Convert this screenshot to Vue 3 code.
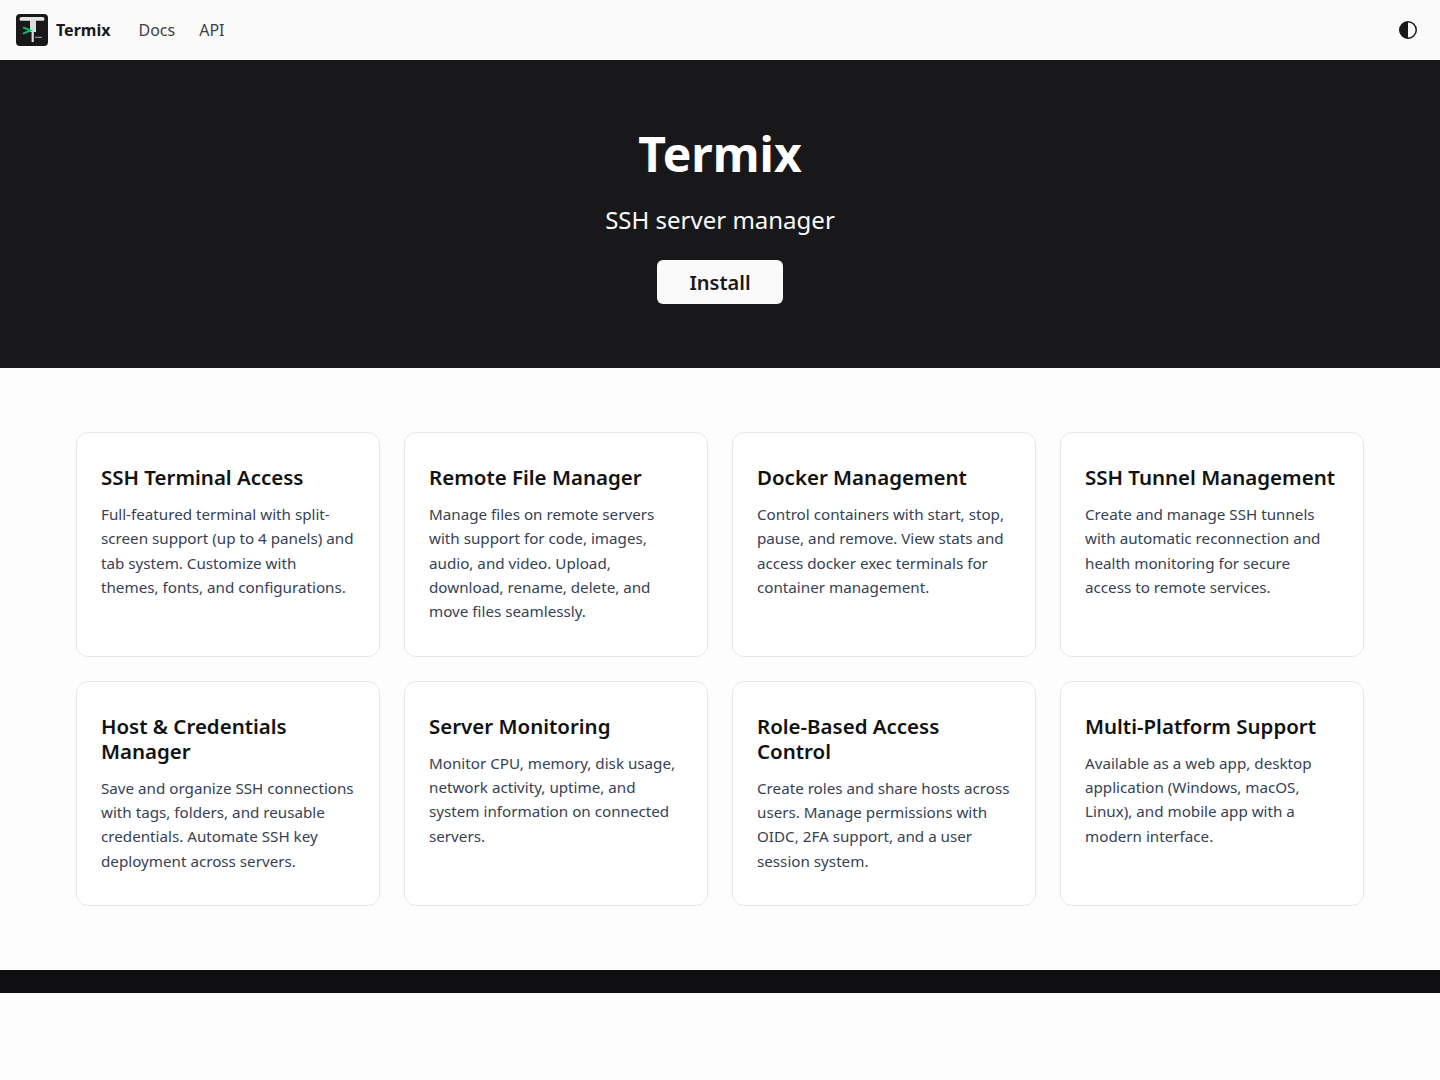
<template>
  <div class="page">
    <!-- Navbar -->
    <header class="navbar">
      <div class="nav-left">
        <a href="#" class="brand">
          <svg class="logo" viewBox="0 0 32 32" width="32" height="32">
            <rect x="0" y="0" width="32" height="32" rx="4" fill="#18181b" />
            <rect x="3.500" y="3" width="25" height="3.800" rx="1.900" fill="#e4e4e4" />
            <path d="M14 6h6v12h-2.200v10h-2.200V18H14z" fill="#dcdcdc" />
            <path d="M19 22.700h7V24h-7z" fill="#8c8c8c" />
            <path d="M7 13.300l7.500 3.200-7.500 3.200" fill="none" stroke="#00c16a" stroke-width="2" />
          </svg>
          <span class="brand-name">Termix</span>
        </a>
        <nav class="nav-links">
          <a href="#" class="nav-link">Docs</a>
          <a href="#" class="nav-link">API</a>
        </nav>
      </div>
      <button class="theme-btn" aria-label="Toggle theme">
        <svg viewBox="0 0 20 20" width="20" height="20">
          <circle cx="10" cy="10" r="8.250" fill="none" stroke="#18181b" stroke-width="1.500" />
          <path d="M10 1.750a8.250 8.250 0 0 0 0 16.500z" fill="#18181b" />
        </svg>
      </button>
    </header>

    <!-- Hero -->
    <section class="hero">
      <h1 class="hero-title">Termix</h1>
      <p class="hero-subtitle">SSH server manager</p>
      <a href="#" class="install-btn">Install</a>
    </section>

    <!-- Features -->
    <main class="features">
      <article v-for="feature in features" :key="feature.title" class="feature-card">
        <h2 class="feature-title">{{ feature.title }}</h2>
        <p class="feature-text">{{ feature.text }}</p>
      </article>
    </main>

    <footer class="footer"></footer>
  </div>
</template>

<script setup>
const features = [
  {
    title: 'SSH Terminal Access',
    text: 'Full-featured terminal with split-screen support (up to 4 panels) and tab system. Customize with themes, fonts, and configurations.'
  },
  {
    title: 'Remote File Manager',
    text: 'Manage files on remote servers with support for code, images, audio, and video. Upload, download, rename, delete, and move files seamlessly.'
  },
  {
    title: 'Docker Management',
    text: 'Control containers with start, stop, pause, and remove. View stats and access docker exec terminals for container management.'
  },
  {
    title: 'SSH Tunnel Management',
    text: 'Create and manage SSH tunnels with automatic reconnection and health monitoring for secure access to remote services.'
  },
  {
    title: 'Host & Credentials Manager',
    text: 'Save and organize SSH connections with tags, folders, and reusable credentials. Automate SSH key deployment across servers.'
  },
  {
    title: 'Server Monitoring',
    text: 'Monitor CPU, memory, disk usage, network activity, uptime, and system information on connected servers.'
  },
  {
    title: 'Role-Based Access Control',
    text: 'Create roles and share hosts across users. Manage permissions with OIDC, 2FA support, and a user session system.'
  },
  {
    title: 'Multi-Platform Support',
    text: 'Available as a web app, desktop application (Windows, macOS, Linux), and mobile app with a modern interface.'
  }
]
</script>

<style>
html,
body {
  margin: 0;
  background: #fdfdfd;
}
</style>

<style scoped>
.page {
  min-height: 1080px;
  background: #fdfdfd;
  font-family: "Noto Sans", sans-serif;
}

/* Navbar */
.navbar {
  height: 60px;
  padding: 0 16px;
  display: flex;
  align-items: center;
  justify-content: space-between;
  background: #fafafa;
}

.nav-left {
  display: flex;
  align-items: center;
  gap: 28px;
}

.brand {
  display: flex;
  align-items: center;
  gap: 8px;
  text-decoration: none;
}

.logo {
  display: block;
}

.brand-name {
  font-size: 16px;
  font-weight: 700;
  color: #18181b;
}

.nav-links {
  display: flex;
  gap: 24px;
}

.nav-link {
  font-size: 16px;
  color: #3f3f46;
  text-decoration: none;
}

.theme-btn {
  width: 32px;
  height: 32px;
  padding: 0;
  border: none;
  background: none;
  display: flex;
  align-items: center;
  justify-content: center;
}

/* Hero */
.hero {
  height: 308px;
  box-sizing: border-box;
  padding-top: 64px;
  background: #18181b;
  display: flex;
  flex-direction: column;
  align-items: center;
}

.hero-title {
  margin: 0;
  font-size: 48px;
  line-height: 60px;
  font-weight: 700;
  color: #fff;
}

.hero-subtitle {
  margin: 20px 0 0;
  font-size: 24px;
  line-height: 32px;
  color: #fafafa;
}

.install-btn {
  margin-top: 24px;
  width: 126px;
  height: 44px;
  border-radius: 6px;
  background: #fafafa;
  color: #18181b;
  font-size: 20px;
  font-weight: 600;
  display: flex;
  align-items: center;
  justify-content: center;
  text-decoration: none;
}

/* Features */
.features {
  padding: 64px 76px;
  display: grid;
  grid-template-columns: repeat(4, 1fr);
  gap: 24px;
}

.feature-card {
  padding: 32px 24px;
  background: #fff;
  border: 1px solid #e5e7eb;
  border-radius: 12px;
}

.feature-title {
  margin: 0 0 12px;
  font-size: 20.48px;
  line-height: 25px;
  font-weight: 600;
  color: #111;
}

.feature-text {
  margin: 0;
  font-size: 15.2px;
  line-height: 1.6;
  color: #364153;
}

.footer {
  height: 23px;
  background: #0f0f11;
}
</style>
